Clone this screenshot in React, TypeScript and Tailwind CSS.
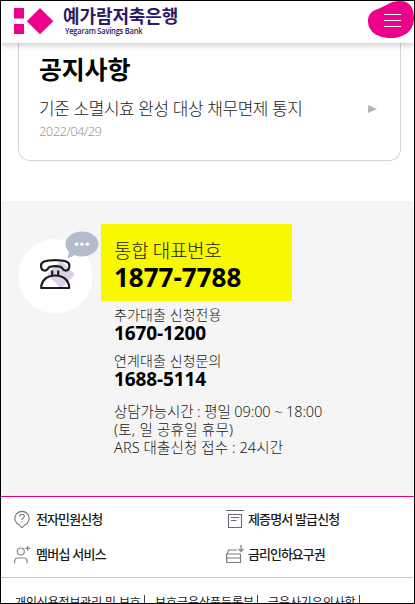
import type { ReactNode } from 'react';

const quickLinks = [
  { label: '전자민원신청', icon: <QuestionIcon />, width: 'w-[212px]', tracking: 'tracking-[-0.9px]' },
  { label: '제증명서 발급신청', icon: <DocumentIcon />, width: 'w-[180px]', tracking: 'tracking-[-0.85px]' },
  { label: '멤버십 서비스', icon: <MemberIcon />, width: 'w-[212px]', tracking: 'tracking-[-0.75px]' },
  { label: '금리인하요구권', icon: <RateIcon />, width: 'w-[180px]', tracking: 'tracking-[-1px]' },
];

const footerLinks = [
  { label: '개인신용정보관리 및 보호', width: 'w-[140px]', tracking: 'tracking-[-0.15px]' },
  { label: '보호금융상품등록부', width: 'w-[113px]', tracking: 'tracking-[-0.05px]' },
  { label: '금융사기유의사항', width: 'w-[102px]', tracking: 'tracking-[-0.1px]' },
];

function Logo() {
  return (
    <div className="flex items-start pl-[13px] pt-[7px]">
      <svg width="40" height="27" viewBox="0 0 40 27" fill="#ec008c">
        <rect x="0" y="0" width="10" height="10.5" />
        <rect x="0" y="16" width="10" height="10" />
        <path d="M26 0 39.3 13.2 26 26.3 12.8 13.2Z" />
      </svg>
      <div className="ml-[9px] -mt-px whitespace-nowrap text-[#2e1a69]">
        <div className="text-[18px] leading-[18px] font-bold tracking-[-0.1px]">예가람저축은행</div>
        <div className="mt-px ml-[2px] w-[92px] origin-left scale-x-[0.84] font-['Open_Sans',sans-serif] text-[9px] leading-[10px] font-semibold tracking-[-0.28px]">
          Yegaram Savings Bank
        </div>
      </div>
    </div>
  );
}

function MenuButton() {
  return (
    <button className="h-[38px] w-[46px]" aria-label="메뉴">
      <svg width="46" height="38" viewBox="0 0 46 38" fill="none">
        <path
          d="M0 20C0 13 4 10 10 8C18 5 22 0 32 0C41 0 46 6 46 17C46 30 36 37 23 37C10 37 0 31 0 20Z"
          fill="#ec008c"
        />
        <path d="M16 13.5H33M16 19.5H33M16 25.5H33" stroke="#fff" />
      </svg>
    </button>
  );
}

function PhoneIcon() {
  return (
    <svg width="82" height="84" viewBox="0 0 82 84" fill="none">
      <circle cx="37.3" cy="45.3" r="37.2" fill="#fff" />
      <path d="M43 29.5 57 43.5 43 57.5 29 43.5Z" fill="#ddd0ea" />
      <g stroke="#1b1b1b" strokeWidth="2.2" strokeLinejoin="round">
        <path d="M23.2 57C23.2 49.5 29 44.5 37.2 44.5S51.2 49.5 51.2 57Z" />
        <path d="M34.2 44.5V39.5M40.2 44.5V39.5" />
        <path d="M23 34.5C23 31 29 29.2 37.2 29.2S51.4 31 51.4 34.5C51.4 37.5 50 39.6 47.5 39.6C44.5 39.6 44.8 36.5 42.5 35.8C39.5 35.1 35 35.1 32 35.8C29.7 36.5 30 39.6 27 39.6C24.5 39.6 23 37.5 23 34.5Z" />
      </g>
      <path
        d="M64 .5C73 .5 80.5 6 80.5 13S73 25.5 64 25.5C61.5 25.5 59 25 57 24L49.5 27.5 51 21C48.7 19 47.5 16 47.5 13C47.5 6 55 .5 64 .5Z"
        fill="#b3bccd"
      />
      <g fill="#fff">
        <circle cx="58.5" cy="13.3" r="1.8" />
        <circle cx="64" cy="13.3" r="1.8" />
        <circle cx="69.3" cy="13.3" r="1.8" />
      </g>
    </svg>
  );
}

function QuestionIcon() {
  return (
    <svg width="16" height="20" viewBox="0 0 16 20" fill="none" stroke="#76797e" strokeWidth="1.1">
      <path d="M5.5 15.1A7.1 7.1 0 1 1 10.5 15.1L8 17.8Z" />
      <path d="M5.7 6.5C5.7 3.6 10.3 3.6 10.3 6.3C10.3 8.2 8 8 8 10M8 11.3V12.5" />
    </svg>
  );
}

function DocumentIcon() {
  return (
    <svg width="18" height="19" viewBox="0 0 18 19" fill="none" stroke="#686b73" strokeWidth="1.1">
      <path d="M0 .5H18M2.5 4.5H15.5V17.5H2.5ZM5 7.5H13M5 10.5H10.5" />
    </svg>
  );
}

function MemberIcon() {
  return (
    <svg width="18" height="20" viewBox="0 0 18 20" fill="none" stroke="#85888e" strokeWidth="1.2">
      <circle cx="6.8" cy="6.5" r="3.5" />
      <path d="M.7 18.5V16Q.7 13 3.5 13H10Q13 13 13 16V18.5M13.7 .8V5.8M11.2 3.3H16.2" />
    </svg>
  );
}

function RateIcon() {
  return (
    <svg width="18" height="19" viewBox="0 0 18 19" fill="none" stroke="#7b7e83" strokeWidth="1.2">
      <path d="M.7 9H14.5V17.5H.7ZM.7 13H14.5M.9 9 2.8 5H11M15 0V6.5M12.5 4 15 6.5 17.5 4" />
    </svg>
  );
}

function PhoneNumber({ label, number }: { label: ReactNode; number: string }) {
  return (
    <div className="h-[46px]">
      <div className="text-[14px] leading-[19px] font-light tracking-[0.1px]">{label}</div>
      <div className="text-[19px] leading-[18px] font-bold tracking-[-0.1px] text-black">{number}</div>
    </div>
  );
}

export default function App() {
  return (
    <div className="flex h-[604px] w-[415px] flex-col overflow-hidden border border-black bg-white font-['Noto_Sans','Noto_Sans_CJK_KR',sans-serif] whitespace-nowrap text-[#1a1a1a]">
      <header className="relative z-10 flex h-[42px] shrink-0 justify-between bg-white shadow-[0_2px_6px_rgba(0,0,0,0.22)]">
        <Logo />
        <MenuButton />
      </header>

      <section className="mr-[13px] ml-[17px] h-[118px] shrink-0 rounded-b-[12px] border-x border-b border-[#d5d5d5] pl-5">
        <h2 className="pt-[10px] text-[25px] leading-[32px] font-bold tracking-[-0.2px] text-black">공지사항</h2>
        <div className="mt-[14px] flex items-center justify-between pr-[23px]">
          <a className="text-[17px] leading-[20px] font-light tracking-[-0.42px]">기준 소멸시효 완성 대상 채무면제 통지</a>
          <svg width="9" height="8" viewBox="0 0 9 8" fill="#b5b5b5">
            <path d="M0 0 9 4 0 8Z" />
          </svg>
        </div>
        <div className="mt-[3px] text-[13px] leading-[18px] font-light tracking-[-0.6px] text-[#999]">2022/04/29</div>
      </section>

      <section className="mt-10 flex h-[295px] shrink-0 bg-[#f5f5f5] pl-[17px]">
        <div className="w-[83px] pt-[30px]">
          <PhoneIcon />
        </div>
        <div className="pt-[23px]">
          <div className="h-[77px] w-[191px] bg-[#f8f800] pt-[15px] pl-[13px]">
            <div className="text-[19px] leading-[24px] font-light tracking-[-0.35px]">통합 대표번호</div>
            <div className="text-[26px] leading-[28px] font-bold text-black">1877-7788</div>
          </div>
          <div className="pt-[4px] pl-[13px]">
            <PhoneNumber label="추가대출 신청전용" number="1670-1200" />
            <PhoneNumber label="연계대출 신청문의" number="1688-5114" />
            <div className="mt-[5px] text-[14.5px] leading-[18px] font-light">
              <p className="tracking-[-0.1px]">상담가능시간 : 평일 09:00 ~ 18:00</p>
              <p className="tracking-[0.25px]">(토, 일 공휴일 휴무)</p>
              <p className="tracking-[0.1px]">ARS 대출신청 접수 : 24시간</p>
            </div>
          </div>
        </div>
      </section>

      <nav className="flex h-[82px] shrink-0 flex-wrap content-start border-t border-b border-t-[#e6008c] border-b-[#c8c8c8] pt-[5px] pl-[13px]">
        {quickLinks.map((link) => (
          <a key={link.label} className={`flex h-[35px] items-center ${link.width}`}>
            <span className="flex w-[22px] shrink-0 justify-start">{link.icon}</span>
            <span className={`pb-[2px] text-[13px] leading-[18px] font-medium ${link.tracking}`}>{link.label}</span>
          </a>
        ))}
      </nav>

      <footer className="flex shrink-0 pt-[16px] pl-[14px] text-[12px] leading-[18px]">
        {footerLinks.map((link) => (
          <div key={link.label} className={`flex ${link.width}`}>
            <span className={link.tracking}>{link.label}</span>
            <span className="mt-px ml-[3px] h-[12px] w-px shrink-0 bg-[#444]" />
          </div>
        ))}
      </footer>
    </div>
  );
}
